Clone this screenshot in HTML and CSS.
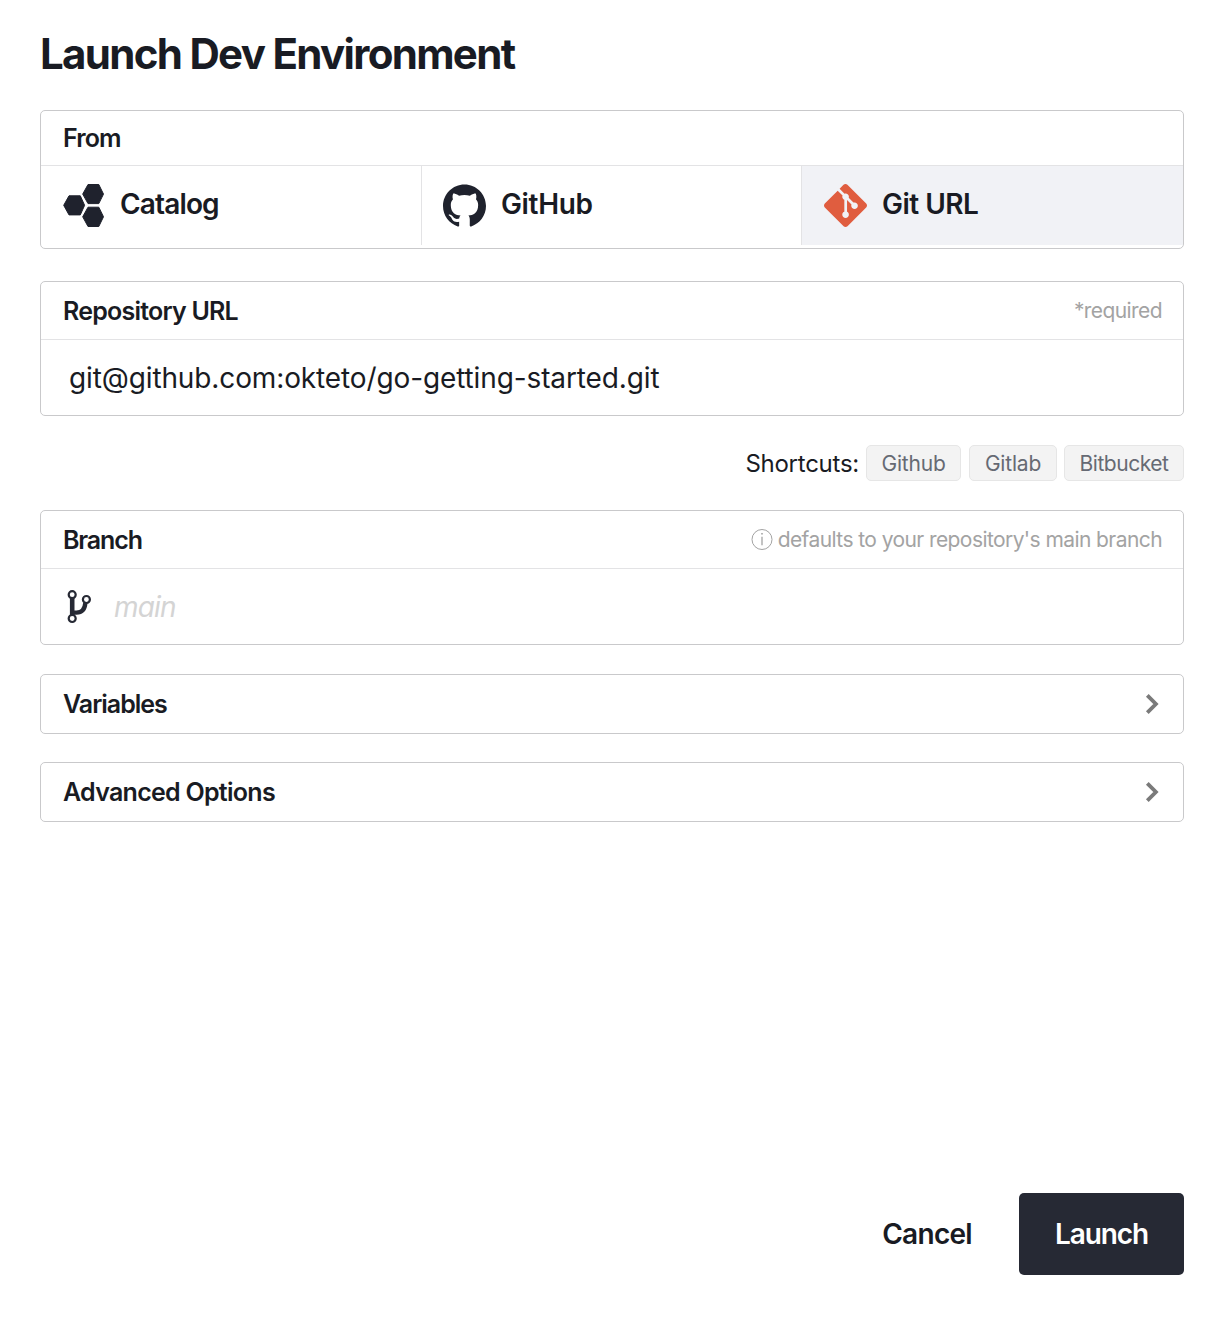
FILE: index.html
```html
<!DOCTYPE html>
<html lang="en">
<head>
<meta charset="utf-8">
<title>Launch Dev Environment</title>
<link rel="stylesheet" href="styles.css">
</head>
<body>
<main class="dialog">
  <h1 class="title">Launch Dev Environment</h1>

  <section class="card source">
    <header class="card-head"><h2 class="label label-from">From</h2></header>
    <div class="tabs">
      <button class="tab tab-catalog">
        <svg class="tab-icon" width="41" height="43" viewBox="0 0 41 43" fill="#1f222d" stroke="#1f222d" stroke-linejoin="round"><path d="M6 11.800h11.300l4.300 9.500-4.300 9.600H6L.7 21.300zM25 .5h10.800l4.700 9.600-4.700 9.500H25l-5.300-9.500zM25 23.200h10.800l4.700 9.600-4.700 9.700H25l-5.300-9.700z"/></svg>
        <span>Catalog</span>
      </button>
      <button class="tab tab-github">
        <svg class="tab-icon" width="43" height="43" viewBox="0 .2 24 23.600" fill="#1f222d"><path d="M12 .297c-6.630 0-12 5.373-12 12 0 5.303 3.438 9.800 8.205 11.385.6.113.82-.258.82-.577 0-.285-.01-1.040-.015-2.040-3.338.724-4.042-1.610-4.042-1.610C4.422 18.070 3.633 17.700 3.633 17.700c-1.087-.744.084-.729.084-.729 1.205.084 1.838 1.236 1.838 1.236 1.070 1.835 2.809 1.305 3.495.998.108-.776.417-1.305.76-1.605-2.665-.3-5.466-1.332-5.466-5.930 0-1.310.465-2.380 1.235-3.220-.135-.303-.54-1.523.105-3.176 0 0 1.005-.322 3.300 1.230.96-.267 1.980-.399 3-.405 1.020.006 2.040.138 3 .405 2.280-1.552 3.285-1.230 3.285-1.230.645 1.653.24 2.873.12 3.176.765.84 1.230 1.910 1.230 3.220 0 4.610-2.805 5.625-5.475 5.920.42.36.81 1.096.81 2.220 0 1.606-.015 2.896-.015 3.286 0 .315.21.69.825.57C20.565 22.092 24 17.592 24 12.297c0-6.627-5.373-12-12-12"/></svg>
        <span>GitHub</span>
      </button>
      <button class="tab tab-giturl selected">
        <svg class="tab-icon" width="43" height="43" viewBox="0 0 24 24" fill="#e05d3f"><path d="M23.546 10.930L13.067.452c-.604-.603-1.582-.603-2.188 0L8.708 2.627l2.760 2.760c.645-.215 1.379-.07 1.889.441.516.515.658 1.258.438 1.900l2.658 2.660c.645-.223 1.387-.078 1.900.435.721.72.721 1.884 0 2.604-.719.719-1.881.719-2.600 0-.539-.541-.674-1.337-.404-1.996L12.860 8.955v6.525c.176.086.342.203.488.348.713.721.713 1.883 0 2.600-.719.721-1.889.721-2.609 0-.719-.719-.719-1.879 0-2.598.182-.18.387-.316.605-.406V8.835c-.217-.091-.424-.222-.6-.401-.545-.545-.676-1.342-.396-2.009L7.636 3.700.45 10.881c-.6.605-.6 1.584 0 2.189l10.480 10.477c.604.604 1.582.604 2.186 0l10.430-10.430c.605-.603.605-1.582 0-2.187"/></svg>
        <span>Git URL</span>
      </button>
    </div>
  </section>

  <section class="card field repo">
    <header class="card-head"><h2 class="label label-repo">Repository URL</h2><span class="hint">*required</span></header>
    <div class="value"><span class="url">git@github.com:okteto/go-getting-started.git</span></div>
  </section>

  <div class="shortcuts">
    <span class="shortcuts-label">Shortcuts:</span>
    <button class="chip chip-github">Github</button>
    <button class="chip chip-gitlab">Gitlab</button>
    <button class="chip chip-bitbucket">Bitbucket</button>
  </div>

  <section class="card field branch">
    <header class="card-head">
      <h2 class="label label-branch">Branch</h2>
      <span class="hint">
        <svg width="22" height="22" viewBox="0 0 22 22" fill="none" stroke="#a3a3a3"><circle cx="11" cy="10.500" r="10"/><path d="M11 7.800v8.400" stroke-width="1.300"/><circle cx="11" cy="4.800" r=".5" fill="#a3a3a3"/></svg>
        <span>defaults to your repository's main branch</span>
      </span>
    </header>
    <div class="value">
      <svg class="branch-icon" width="26" height="34" viewBox="0 0 26 34" fill="none" stroke="#262934"><path d="M6.200 8v17" stroke-width="4.600"/><path d="M6.200 22.600h4.300c5.500 0 8.300-3 8.800-9.400" stroke-width="4.400"/><g fill="#fff" stroke-width="2.200"><circle cx="6.200" cy="4.700" r="3.500"/><circle cx="20.400" cy="9.500" r="3.500"/><circle cx="6.200" cy="28.500" r="3.500"/></g></svg>
      <span class="placeholder">main</span>
    </div>
  </section>

  <section class="card row variables">
    <h2 class="label label-variables">Variables</h2>
    <svg width="14" height="20" viewBox="0 0 14 20" fill="none" stroke="#7a7a7a" stroke-width="3.800"><path d="M2.300 1.400L10.900 10l-8.600 8.600"/></svg>
  </section>
  <section class="card row">
    <h2 class="label label-advanced">Advanced Options</h2>
    <svg width="14" height="20" viewBox="0 0 14 20" fill="none" stroke="#7a7a7a" stroke-width="3.800"><path d="M2.300 1.400L10.900 10l-8.600 8.600"/></svg>
  </section>

  <footer class="actions">
    <button class="cancel">Cancel</button>
    <button class="launch">Launch</button>
  </footer>
</main>
</body>
</html>
```
FILE: styles.css
```css
* { box-sizing: border-box; }
body { margin: 0; background: #fff; color: #191b23; font-family: Inter, "Liberation Sans", sans-serif; }
h1, h2 { margin: 0; font-weight: 600; }
button { border: 0; margin: 0; padding: 0; background: none; color: inherit; font: inherit; }
svg { display: block; flex: none; }
span, h1, h2 { white-space: nowrap; }
.dialog { display: flex; flex-direction: column; width: 1218px; height: 1318px; padding: 28px 34px 43px 40px; }
.title { height: 52px; margin-bottom: 30px; font-size: 42px; font-weight: 650; line-height: 52px; letter-spacing: -1.68px; }
.card { border: 1px solid #c9c9cb; border-radius: 5px; flex: none; }
.card-head { display: flex; align-items: center; justify-content: space-between; height: 58px; padding: 0 21px 0 22px; border-bottom: 1px solid #e3e3e5; }
.label { font-size: 25px; line-height: 30px; }
.label-from { letter-spacing: -.9px; }
.label-repo { letter-spacing: -.78px; }
.label-branch { letter-spacing: -1.15px; }
.label-variables { letter-spacing: -1px; }
.label-advanced { letter-spacing: -.72px; }
.source { height: 139px; margin-bottom: 32px; }
.source .card-head { height: 55px; }
.tabs { display: grid; grid-template-columns: 380px 380px 1fr; height: 79px; }
.tab { display: flex; align-items: center; gap: 15px; padding-left: 22px; font-size: 28px; font-weight: 600; border-left: 1px solid #e3e3e5; }
.tab span { padding-bottom: 3px; line-height: 34px; }
.tab-catalog { gap: 16px; border-left: 0; letter-spacing: -.85px; }
.tab-github { padding-left: 21px; letter-spacing: -.35px; }
.tab-giturl { letter-spacing: -.5px; }
.tab.selected { background: #f1f2f6; }
.field { height: 135px; }
.repo { margin-bottom: 29px; }
.hint { display: flex; align-items: center; gap: 5px; color: #a3a3a3; font-size: 21px; letter-spacing: -.58px; }
.value { display: flex; align-items: center; height: 75px; font-size: 28px; }
.url { padding: 1px 0 0 28px; letter-spacing: -.12px; }
.shortcuts { display: flex; align-items: center; justify-content: flex-end; height: 36px; margin-bottom: 29px; flex: none; }
.shortcuts-label { margin-right: 7px; font-size: 24px; letter-spacing: -.25px; }
.chip { display: flex; align-items: center; justify-content: center; height: 36px; padding-top: 1px; border: 1px solid #e6e6e6; border-radius: 5px; background: #f3f3f3; color: #666a73; font-size: 21px; letter-spacing: -.2px; }
.chip-github { width: 95px; margin-right: 8px; }
.chip-gitlab { width: 88px; margin-right: 7px; }
.chip-bitbucket { width: 120px; letter-spacing: -.45px; }
.branch { margin-bottom: 29px; }
.branch-icon { margin-left: 25px; }
.placeholder { margin-left: 22px; padding-top: 1px; color: #d4d4d4; font-style: italic; letter-spacing: -.8px; }
.row { display: flex; align-items: center; justify-content: space-between; height: 60px; padding: 0 24px 0 22px; }
.variables { margin-bottom: 28px; }
.actions { display: flex; justify-content: flex-end; margin-top: auto; font-size: 28px; font-weight: 600; }
.cancel { margin-right: 47px; letter-spacing: -.7px; }
.launch { width: 165px; height: 82px; border-radius: 5px; background: #262934; color: #fff; letter-spacing: -1.1px; }
```
